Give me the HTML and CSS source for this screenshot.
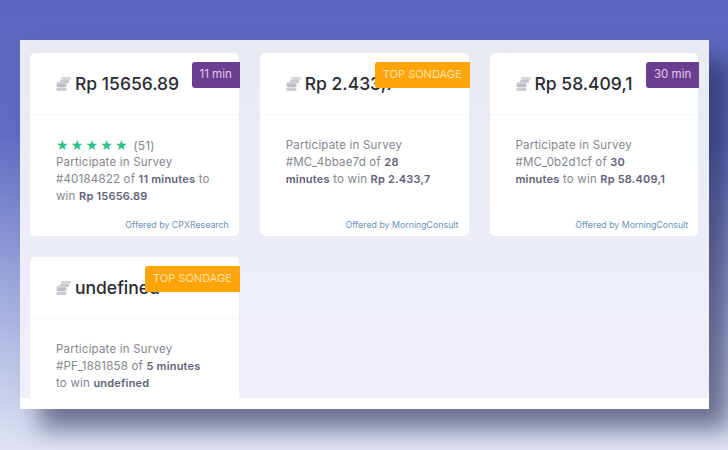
FILE: index.html
```html
<!DOCTYPE html>
<html lang="en">
<head>
  <meta charset="UTF-8" />
  <title>Surveys</title>
  <link rel="stylesheet" href="styles.css">
</head>
<body>
  <svg class="defs" width="0" height="0">
    <symbol id="coins" viewBox="0 0 15 16">
      <rect x="5" y="1" width="10" height="3" rx="1" fill="#d6d7da"/>
      <rect x="4" y="4" width="9" height="3" rx="1" fill="#c6c7cb"/>
      <ellipse cx="5.500" cy="7.500" rx="5" ry="2" fill="#cfd0d4"/>
      <rect x=".5" y="8" width="10" height="3" rx="1" fill="#bdbec2"/>
      <rect x=".5" y="11.500" width="10" height="3.500" rx="1.500" fill="#cbccd0"/>
    </symbol>
  </svg>

  <div class="panel">
    <div class="grid">

      <div class="card">
        <div class="badge badge-time">11 min</div>
        <div class="card-head">
          <svg class="coin"><use href="#coins"/></svg>
          <span class="amount">Rp 15656.89</span>
        </div>
        <div class="card-body">
          <div class="rating"><span class="stars">★★★★★</span> <span class="count">(51)</span></div>
          <p>Participate in Survey #40184822 of <strong>11 minutes</strong> to win <strong>Rp 15656.89</strong></p>
        </div>
        <div class="offered">Offered by CPXResearch</div>
      </div>

      <div class="card">
        <div class="badge badge-top">TOP SONDAGE</div>
        <div class="card-head">
          <svg class="coin"><use href="#coins"/></svg>
          <span class="amount">Rp 2.433,7</span>
        </div>
        <div class="card-body">
          <p>Participate in Survey #MC_4bbae7d of <strong>28 minutes</strong> to win <strong>Rp 2.433,7</strong></p>
        </div>
        <div class="offered">Offered by MorningConsult</div>
      </div>

      <div class="card">
        <div class="badge badge-time">30 min</div>
        <div class="card-head">
          <svg class="coin"><use href="#coins"/></svg>
          <span class="amount">Rp 58.409,1</span>
        </div>
        <div class="card-body">
          <p>Participate in Survey #MC_0b2d1cf of <strong>30 minutes</strong> to win <strong>Rp 58.409,1</strong></p>
        </div>
        <div class="offered">Offered by MorningConsult</div>
      </div>

      <div class="card">
        <div class="badge badge-top">TOP SONDAGE</div>
        <div class="card-head">
          <svg class="coin"><use href="#coins"/></svg>
          <span class="amount">undefined</span>
        </div>
        <div class="card-body">
          <p>Participate in Survey #PF_1881858 of <strong>5 minutes</strong> to win <strong>undefined</strong></p>
        </div>
      </div>

    </div>
  </div>
</body>
</html>
```

FILE: styles.css
```css
html, body {
  margin: 0;
  height: 450px;
  overflow: hidden;
}
body {
  font-family: Inter, "Liberation Sans", sans-serif;
  background: linear-gradient(180deg, #5b67c0 0%, #5f6cc2 30%, #9aa5da 62%, #dfe3f3 100%);
  padding: 40px 19px 0 20px;
  box-sizing: border-box;
}
.defs {
  position: absolute;
}
.panel {
  height: 369px;
  background: #fff;
  box-shadow: 20px 20px 22px rgba(30, 32, 70, 0.55);
}
.grid {
  height: 358px;
  overflow: hidden;
  box-sizing: border-box;
  background: linear-gradient(180deg, #e9ebf3 0%, #eeeff9 100%);
  padding: 13px 10px 0;
  display: grid;
  grid-template-columns: repeat(3, 208.75px);
  grid-template-rows: 183px 183px;
  column-gap: 21px;
  row-gap: 21px;
}
.card {
  position: relative;
  display: flex;
  flex-direction: column;
  background: #fff;
  border-radius: 5px;
}
.card-head {
  height: 61px;
  display: flex;
  align-items: center;
  gap: 4px;
  padding-left: 26px;
  border-bottom: 1px solid #f6f7fa;
}
.coin {
  width: 15px;
  height: 16px;
}
.amount {
  font-size: 17.500px;
  font-weight: 500;
  color: #2a2a32;
  white-space: nowrap;
}
.card-body {
  padding: 22px 28px 0 26px;
  font-size: 11.500px;
  letter-spacing: 0.2px;
  line-height: 17px;
  color: #85858d;
}
.card-body p {
  margin: 0;
}
.card-body strong {
  font-size: 11px;
  font-weight: 600;
  color: #62627a;
}
.rating {
  height: 17px;
  line-height: 17px;
}
.stars {
  color: #2fbf8a;
  font-family: "DejaVu Sans", sans-serif;
  font-size: 14px;
  letter-spacing: 2.200px;
}
.count {
  font-size: 12px;
}
.offered {
  margin-top: auto;
  padding: 0 10px 5px 0;
  text-align: right;
  font-size: 8.800px;
  line-height: 12px;
  color: #6a93b8;
}
.badge {
  position: absolute;
  top: 9px;
  right: -1px;
  height: 26px;
  line-height: 25px;
  padding: 0 8px;
  font-size: 11.500px;
  border-radius: 3px 0 0 3px;
}
.badge-time {
  background: #6b3f8f;
  color: #e3c8f0;
}
.badge-top {
  font-size: 11px;
  background: #ffa50a;
  color: #ffe3a8;
}
```
